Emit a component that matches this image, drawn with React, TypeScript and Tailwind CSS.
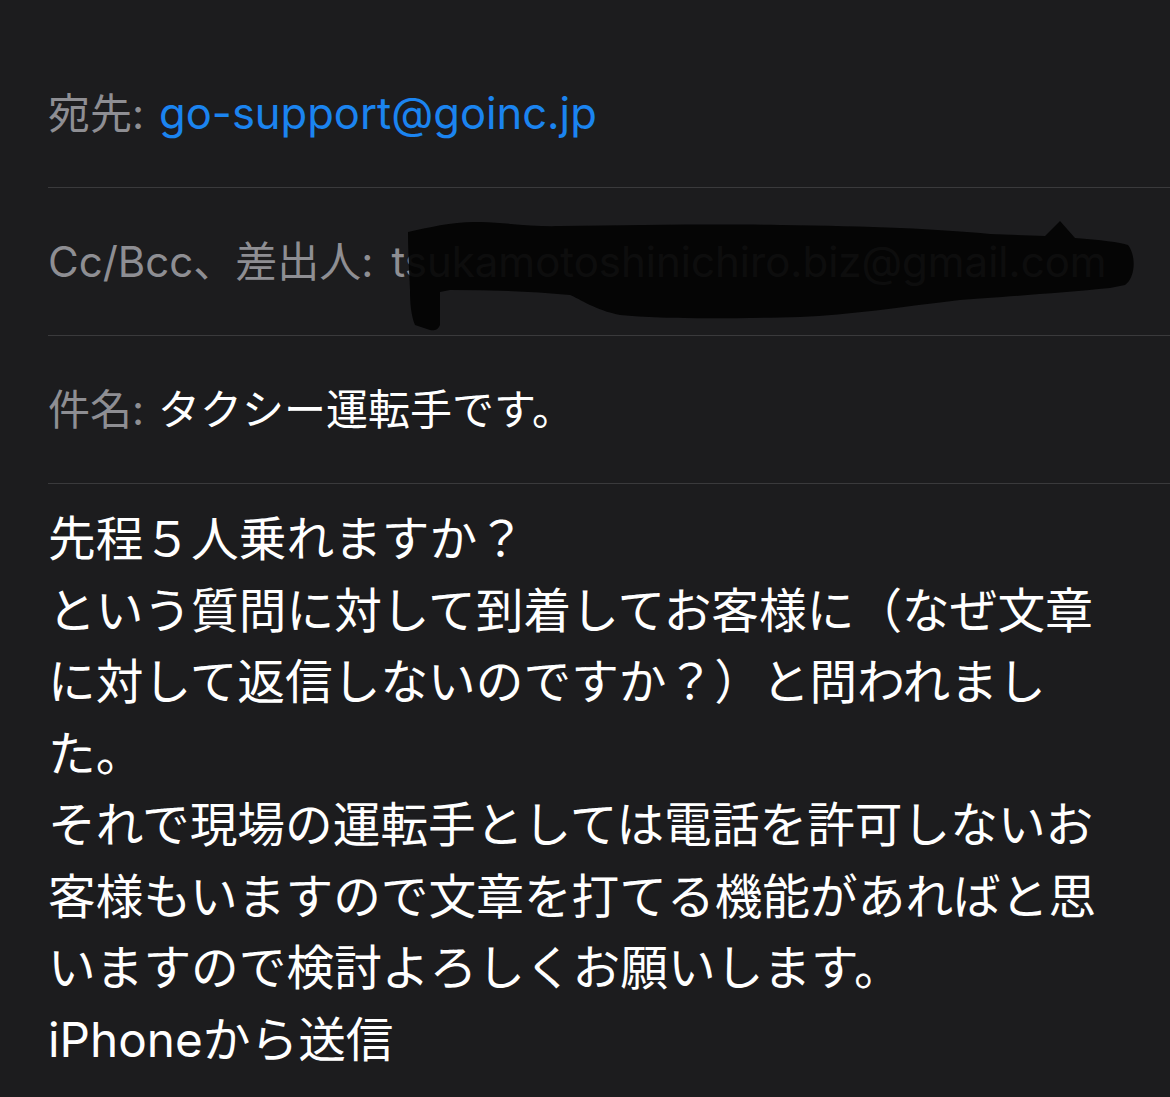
const lines = [
  '先程５人乗れますか？',
  'という質問に対して到着してお客様に（なぜ文章',
  'に対して返信しないのですか？）と問われまし',
  'た。',
  'それで現場の運転手としては電話を許可しないお',
  '客様もいますので文章を打てる機能があればと思',
  'いますので検討よろしくお願いします。',
  'iPhoneから送信',
];

function HeaderRow({ label, children }: { label: string; children: React.ReactNode }) {
  return (
    <div className="relative flex h-[148px] items-center border-b border-[#3a3a3c] text-[42px] whitespace-nowrap">
      <span className="text-[#8e8e93]">{label}</span>
      {children}
    </div>
  );
}

// marker scribble hiding the sender address
function Scribble() {
  return (
    <svg
      className="pointer-events-none absolute left-[352px] top-[27px]"
      width="740"
      height="120"
      viewBox="0 0 740 120"
    >
      <path
        d="M8 17 C30 12 55 6 80 7 C110 8 135 12 160 11 C240 10 320 9 380 10 C470 11 540 14 590 19 L645 21 L660 6 L675 23 C700 25 720 27 728 30 C736 40 736 62 725 70 L710 73 C660 78 600 82 560 85 C500 92 450 100 400 102 C320 104 260 104 220 100 C195 95 180 84 170 80 C130 76 90 75 50 75 L40 77 L40 110 C38 115 34 116 30 115 L15 110 C11 100 10 88 10 75 C9 55 8 35 8 17 Z"
        fill="#030303"
        fillOpacity="0.93"
      />
    </svg>
  );
}

export default function App() {
  return (
    <div
      className="min-h-[1097px] w-[1170px] bg-[#1c1c1e] pt-10 pl-12"
      style={{ fontFamily: 'Inter, "Noto Sans CJK JP", sans-serif' }}
    >
      <HeaderRow label="宛先:">
        <span className="ml-[15px] text-[43.5px] text-[#1b84f0]">go-support@goinc.jp</span>
      </HeaderRow>
      <HeaderRow label="Cc/Bcc、差出人:">
        <span className="ml-[18px] text-[#8e8e93]">tsukamotoshinichiro.biz@gmail.com</span>
        <Scribble />
      </HeaderRow>
      <HeaderRow label="件名:">
        <span className="ml-[14px] text-white">タクシー運転手です。</span>
      </HeaderRow>
      <div className="pt-5 text-[47.7px] leading-[71.5px] text-white">
        {lines.map((l) => (
          <div key={l} className="whitespace-nowrap">
            {l}
          </div>
        ))}
      </div>
    </div>
  );
}
